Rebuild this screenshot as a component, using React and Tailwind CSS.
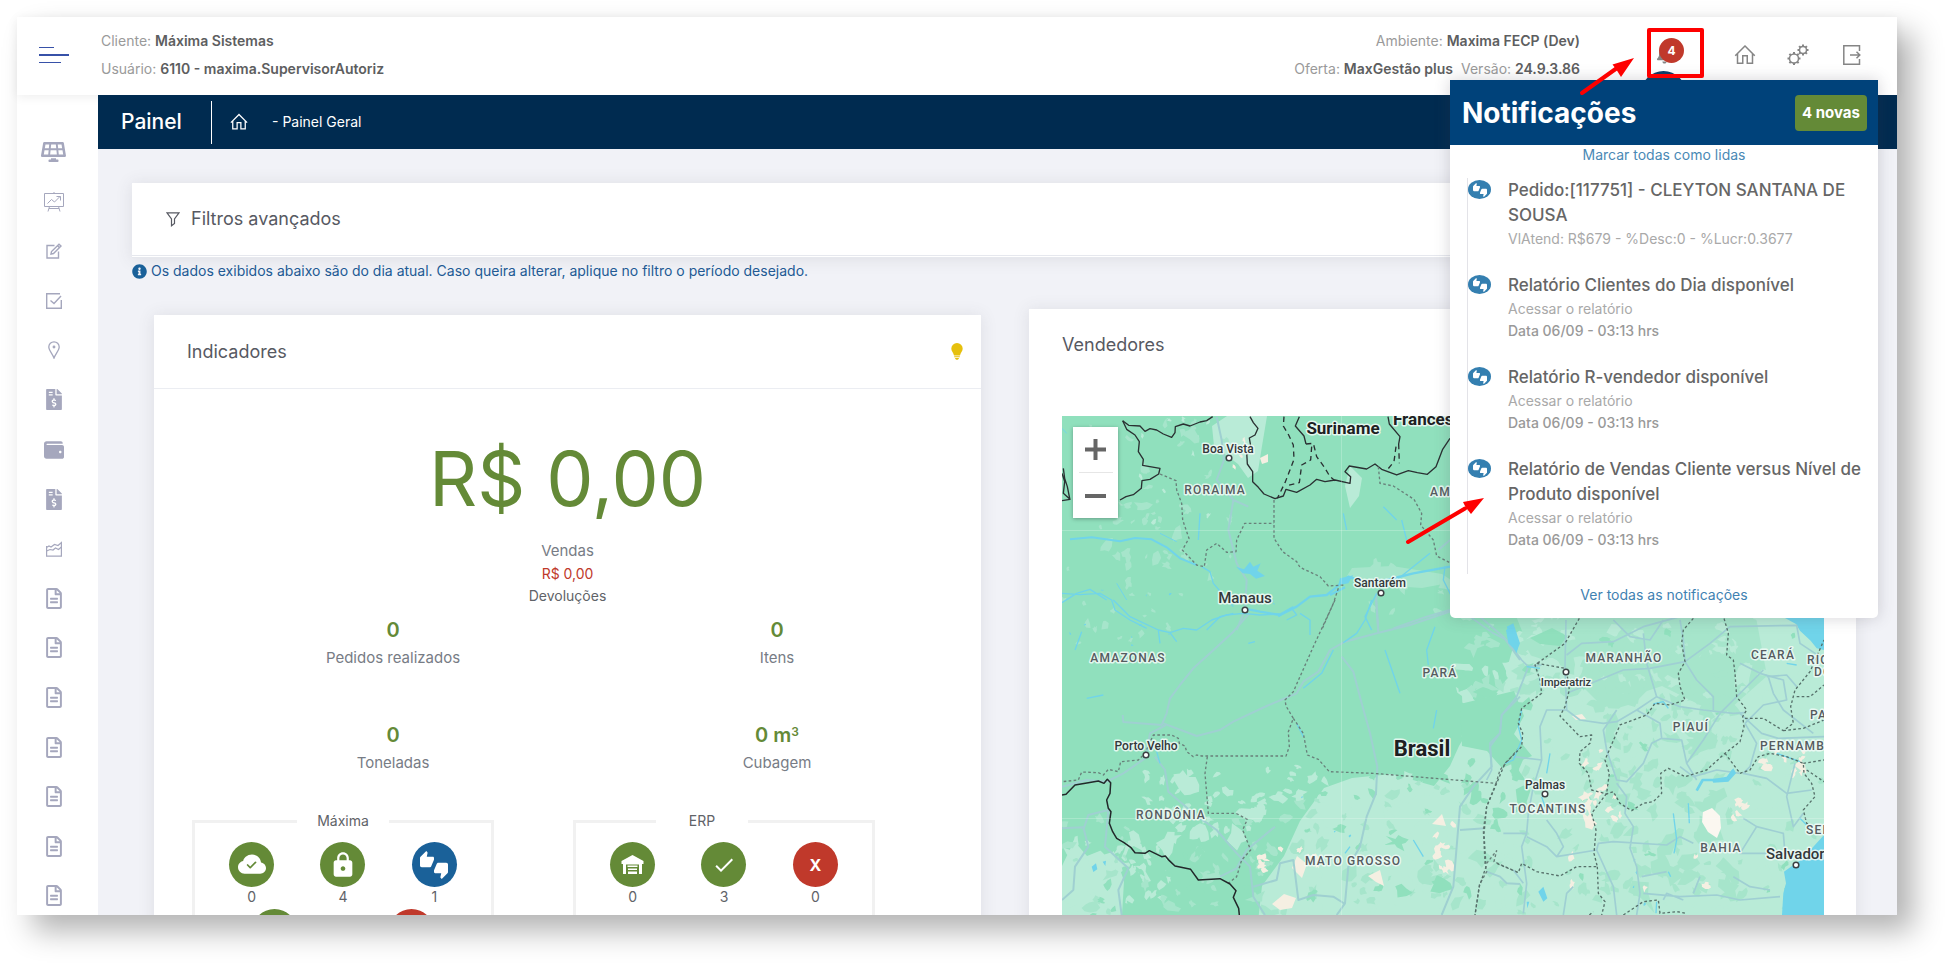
import {
  FaSolarPanel, FaFileInvoiceDollar, FaWallet, FaRegFileAlt, FaInfoCircle, FaBell,
} from "react-icons/fa";
import { MdLock, MdThumbsUpDown, MdCheck } from "react-icons/md";
import { BsCloudCheckFill } from "react-icons/bs";
import { LiaHomeSolid } from "react-icons/lia";

/* ---------- line icons ---------- */

const line = { fill: "none", stroke: "currentColor" };

function PresentationIcon() {
  return (
    <svg className="h-5 w-5" viewBox="0 0 20 20" {...line} strokeWidth="1">
      <path d="M.5 1.5h19v13H.5zM10 0v1.5M5.5 14.5L4 19.5M14.500 14.500L16 19.500M5 16.500h10" />
      <path d="M3.500 11.500L7.500 7.500L10.500 10L16 4.500M12.500 4.500H16.500V8.500" />
    </svg>
  );
}

function EditIcon() {
  return (
    <svg className="h-4 w-4" viewBox="0 0 16 16" {...line} strokeWidth="1.4">
      <path d="M8.500 2.500H1V15H12.500V8.500" />
      <path d="M5 11L5.500 8.500L13 1.200L15 3L7.500 10.500Z" />
      <path d="M11.500 2.700L13.500 4.600" />
    </svg>
  );
}

function CheckBoxIcon() {
  return (
    <svg className="h-4 w-4" viewBox="0 0 16 16" {...line} strokeWidth="1.4">
      <path d="M14 .7H.7V15.300H15.300V7" />
      <path d="M4.500 7.500L8 10.500L15 3" />
    </svg>
  );
}

function PinIcon() {
  return (
    <svg className="h-[18px] w-3" viewBox="0 0 12 18" {...line} strokeWidth="1.3">
      <path d="M6 17C5 13.500.8 9.500.8 6A5.200 5.200 0 0 1 11.200 6C11.200 9.500 7 13.500 6 17Z" />
      <circle cx="6" cy="6" r=".8" fill="currentColor" />
    </svg>
  );
}

function AreaChartIcon() {
  return (
    <svg className="h-4 w-4" viewBox="0 0 16 16" {...line} strokeWidth="1.2">
      <path d="M.6 5V15.200H15.400V1.500L12 4.500L8.500 3.500L5 6L3 5L.6 6.500" />
      <path d="M.6 10L4 8.500L7 9L9.500 7L12.500 8.500L15.400 6" />
    </svg>
  );
}

function FilterIcon() {
  return (
    <svg className="h-4 w-[14px]" viewBox="0 0 14 16" {...line} strokeWidth="1.2">
      <path d="M1 1.800H13L8.500 8V12.500L5.500 14.800V8Z" />
    </svg>
  );
}

function BulbIcon() {
  return (
    <svg className="h-[17px] w-3" viewBox="0 0 12 17" fill="#e6c00d">
      <path d="M6 0A5.700 5.700 0 0 0 .3 5.800C.3 8.500 2.600 9.800 3 12.500H9C9.400 9.800 11.700 8.500 11.700 5.800A5.700 5.700 0 0 0 6 0ZM3.200 13.200H8.800V14.300H3.200ZM4 15H8C7.800 16.200 7 16.800 6 16.800S4.200 16.200 4 15Z" />
    </svg>
  );
}

function Gear({ cx, cy, r }) {
  return (
    <g transform={`translate(${cx} ${cy})`}>
      <circle r={r} />
      {[0, 45, 90, 135, 180, 225, 270, 315].map((a) => (
        <path key={a} transform={`rotate(${a})`} d={`M0 ${-r}V${-r - 2}`} strokeWidth="2" />
      ))}
    </g>
  );
}

function GearsIcon() {
  return (
    <svg className="h-[22px] w-[22px]" viewBox="0 0 22 22" {...line} strokeWidth="1.500">
      <Gear cx={7} cy={14.5} r={4.500} />
      <Gear cx={16} cy={6} r={3.500} />
    </svg>
  );
}

function ExitIcon() {
  return (
    <svg className="h-5 w-[18px]" viewBox="0 0 18 20" {...line} strokeWidth="1.500">
      <path d="M16.500 6V.8H.8V19.200H16.500V14" />
      <path d="M7 10H16.800M13.500 6.800L16.800 10L13.500 13.200" />
    </svg>
  );
}

function WarehouseIcon() {
  return (
    <svg className="h-[20px] w-[23px]" viewBox="0 0 23 20" fill="currentColor">
      <path d="M11.500 0L22.500 6V9H21V19H18V9.500H5V19H2V9H.5V6Z" />
      <path d="M6.500 10.500H16.500V12H6.500ZM7 13.500H16V15H7ZM7 16.500H16V19H7Z" />
    </svg>
  );
}

/* ---------- sidebar ---------- */

const fileItems = ["Pedidos", "Clientes", "Produtos", "Metas", "Visitas", "Rotas", "Comissões"];

const menu = [
  { name: "Painel", icon: <FaSolarPanel className="h-[22px] w-[25px]" /> },
  { name: "Desempenho", icon: <PresentationIcon /> },
  { name: "Edição", icon: <EditIcon /> },
  { name: "Tarefas", icon: <CheckBoxIcon /> },
  { name: "Localização", icon: <PinIcon /> },
  { name: "Faturas", icon: <FaFileInvoiceDollar className="h-[21px] w-4" /> },
  { name: "Carteira", icon: <FaWallet className="h-5 w-5" /> },
  { name: "Cobranças", icon: <FaFileInvoiceDollar className="h-[21px] w-4" /> },
  { name: "Gráficos", icon: <AreaChartIcon /> },
  ...fileItems.map((name) => ({ name, icon: <FaRegFileAlt className="h-[21px] w-4" /> })),
];

function Sidebar() {
  return (
    <nav aria-label="Menu" className="w-[81px] shrink-0 bg-white">
      <ul className="flex h-full flex-col justify-between pt-[45px] pb-[7px] text-[#a5a7bd]">
        {menu.map((m) => (
          <li key={m.name} className="flex justify-center pr-2">
            <a href="#" aria-label={m.name} className="flex h-6 items-center">
              {m.icon}
            </a>
          </li>
        ))}
      </ul>
    </nav>
  );
}

/* ---------- header ---------- */

function Info({ label, value }) {
  return (
    <span>
      {label}: <span className="font-semibold text-[#5d5e60]">{value}</span>
    </span>
  );
}

function Header() {
  return (
    <header className="relative z-10 flex h-[78px] shrink-0 items-center bg-white pr-9 pb-[2px] pl-[22px] text-sm leading-7 text-[#9a9a9a] shadow-[0_2px_10px_rgba(0,0,0,0.07)]">
      <button type="button" aria-label="Abrir menu" className="flex w-[62px] flex-col gap-[6px]">
        <span className="h-px w-[15px] bg-[#3751a8]" />
        <span className="h-[2px] w-[30px] bg-[#3751a8]" />
        <span className="h-px w-[22px] bg-[#3751a8]" />
      </button>
      <div className="flex flex-col">
        <Info label="Cliente" value="Máxima Sistemas" />
        <Info label="Usuário" value="6110 - maxima.SupervisorAutoriz" />
      </div>
      <div className="ml-auto flex flex-col items-end">
        <Info label="Ambiente" value="Maxima FECP (Dev)" />
        <span className="flex gap-2">
          <Info label="Oferta" value="MaxGestão plus" />
          <Info label="Versão" value="24.9.3.86" />
        </span>
      </div>
      <div className="flex items-center text-[#858585]">
        <button type="button" aria-label="Notificações" className="relative ml-[77px] w-[21px] py-2">
          <FaBell className="h-[18px] w-[15px]" />
          <span className="absolute top-0 left-[2px] flex h-[25px] w-[25px] items-center justify-center rounded-full bg-[#c0392b] text-xs font-bold text-white">
            4
          </span>
        </button>
        <a href="#" aria-label="Início" className="ml-[55px]">
          <LiaHomeSolid className="h-6 w-6" />
        </a>
        <a href="#" aria-label="Configurações" className="ml-[30px]">
          <GearsIcon />
        </a>
        <a href="#" aria-label="Sair" className="ml-[34px]">
          <ExitIcon />
        </a>
      </div>
    </header>
  );
}

/* ---------- indicators ---------- */

function Kpi({ value, label }) {
  return (
    <div className="text-center leading-7">
      <div className="text-xl font-semibold text-[#648a37]">{value}</div>
      <div className="text-[15px] text-[#777c85]">{label}</div>
    </div>
  );
}

function Status({ tone, value, children }) {
  return (
    <div className="flex flex-col items-center text-sm leading-5 text-[#5f6368]">
      <span className={`flex h-[45px] w-[45px] items-center justify-center rounded-full text-white ${tone}`}>
        {children}
      </span>
      {value}
    </div>
  );
}

const green = "bg-[#648a37]";
const red = "bg-[#c0392b]";

function Indicadores() {
  return (
    <section className="mt-[6px] bg-white shadow-[0_1px_15px_1px_rgba(69,65,78,0.1)]">
      <div className="flex h-[74px] items-center justify-between border-b border-[#ebedf2] pr-[18px] pl-[33px]">
        <h2 className="text-lg text-[#575962]">Indicadores</h2>
        <BulbIcon />
      </div>
      <div className="pt-[50px] text-center">
        <div className="text-[75px] leading-[80px] text-[#648a37]">R$ 0,00</div>
        <div className="mt-5 text-[15px] leading-6 text-[#777c85]">Vendas</div>
        <div className="text-sm leading-[22px] text-[#c0392b]">R$ 0,00</div>
        <div className="text-sm leading-[22px] text-[#5f6368]">Devoluções</div>
      </div>
      <div className="mt-[9px] grid grid-cols-2 gap-y-[49px] pr-3 pl-[47px]">
        <Kpi value="0" label="Pedidos realizados" />
        <Kpi value="0" label="Itens" />
        <Kpi value="0" label="Toneladas" />
        <Kpi value={<>0 m<sup className="text-xs">3</sup></>} label="Cubagem" />
      </div>
      <div className="mt-[34px] grid grid-cols-2 pr-[27px] pl-[38px]">
        <fieldset className="mr-[79px] border-[3px] border-[#f1f1f1] px-[11px] pb-4">
          <legend className="mx-auto w-[92px] text-center text-sm leading-5 text-[#5f6368]">Máxima</legend>
          <div className="grid grid-cols-3 pt-[11px]">
            <Status tone={green} value="0"><BsCloudCheckFill className="h-7 w-7" /></Status>
            <Status tone={green} value="4"><MdLock className="h-7 w-7" /></Status>
            <Status tone="bg-[#1a6199]" value="1"><MdThumbsUpDown className="h-7 w-7" /></Status>
          </div>
          <div className="mt-[2px] grid grid-cols-2">
            <Status tone={green} />
            <Status tone={red} />
          </div>
        </fieldset>
        <fieldset className="mr-[79px] border-[3px] border-[#f1f1f1] px-[11px] pb-4">
          <legend className="mr-auto ml-[69px] w-[92px] text-center text-sm leading-5 text-[#5f6368]">ERP</legend>
          <div className="grid grid-cols-3 pt-[11px]">
            <Status tone={green} value="0"><WarehouseIcon /></Status>
            <Status tone={green} value="3"><MdCheck className="h-6 w-6" /></Status>
            <Status tone={red} value="0"><span className="text-base font-bold">X</span></Status>
          </div>
        </fieldset>
      </div>
    </section>
  );
}

/* ---------- map ---------- */

function makeRandom(seed) {
  let s = seed;
  return () => {
    s = (s * 1664525 + 1013904223) % 4294967296;
    return s / 4294967296;
  };
}

function patches(seed, zones) {
  const rnd = makeRandom(seed);
  let d = "";
  for (const [x, y, w, h, n, rMin, rMax] of zones) {
    for (let i = 0; i < n; i++) {
      const cx = x + rnd() * w;
      const cy = y + rnd() * h;
      const r = rMin + rnd() * rnd() * (rMax - rMin);
      const tilt = rnd() * 3.14;
      const steps = 7 + Math.floor(rnd() * 6);
      for (let k = 0; k < steps; k++) {
        const a = (k / steps) * Math.PI * 2;
        const q = r * (0.35 + rnd() * 0.85);
        const px = Math.cos(a) * q * 1.300;
        const py = Math.sin(a) * q * 0.8;
        const X = cx + px * Math.cos(tilt) - py * Math.sin(tilt);
        const Y = cy + px * Math.sin(tilt) + py * Math.cos(tilt);
        d += `${k ? "L" : "M"}${X.toFixed(1)} ${Y.toFixed(1)}`;
      }
      d += "Z";
    }
  }
  return d;
}

const lightPatches = patches(11, [
  [235, 355, 220, 140, 90, 3, 14],
  [400, 240, 60, 160, 40, 3, 12],
  [460, 170, 300, 330, 190, 4, 18],
  [80, 355, 120, 70, 36, 3, 14],
  [0, 420, 110, 80, 36, 3, 14],
  [190, 350, 80, 60, 16, 3, 10],
  [40, 2, 130, 140, 14, 2, 6],
]);
const midPatches = patches(29, [
  [400, 150, 80, 130, 46, 3, 14],
  [470, 160, 200, 130, 90, 4, 18],
  [540, 290, 130, 190, 80, 4, 20],
  [440, 300, 320, 190, 60, 3, 12],
  [220, 360, 240, 140, 50, 3, 12],
  [0, 400, 220, 100, 40, 3, 10],
  [20, 5, 150, 160, 50, 2, 9],
  [0, 150, 120, 80, 18, 2, 7],
  [300, 150, 120, 60, 14, 3, 9],
]);
const darkPatches = patches(47, [
  [240, 360, 220, 130, 26, 3, 13],
  [400, 190, 70, 200, 26, 4, 18],
  [480, 170, 260, 320, 22, 2, 9],
  [20, 430, 170, 70, 20, 3, 11],
]);
const sandPatches = patches(63, [
  [515, 372, 45, 34, 14, 3, 9],
  [700, 335, 45, 26, 12, 3, 10],
  [670, 370, 14, 34, 5, 4, 8],
  [522, 335, 20, 30, 4, 3, 7],
  [195, 430, 65, 30, 10, 3, 7],
  [370, 405, 26, 50, 9, 3, 7],
  [170, 22, 20, 30, 4, 2, 5],
  [500, 440, 160, 50, 5, 3, 6],
]);
const ponds = patches(85, [
  [0, 170, 260, 60, 12, 1, 2],
  [230, 380, 60, 60, 3, 1, 3],
  [560, 400, 40, 100, 4, 1, 3],
]);

function MapLabel({ x, y, size, tone, start, children }) {
  return (
    <text x={x} y={y} fontSize={size} textAnchor={start ? "start" : "middle"} className={tone}>
      {children}
    </text>
  );
}

const stateTone = "fill-[#555b5f] font-medium tracking-widest";
const cityTone = "fill-[#33383b] font-medium";
const countryTone = "fill-[#1d2022] font-bold";

const states = [
  [153, 78, "RORAIMA"], [66, 246, "AMAZONAS"], [378, 261, "PARÁ"], [109, 403, "RONDÔNIA"],
  [291, 449, "MATO GROSSO"], [486, 397, "TOCANTINS"], [562, 246, "MARANHÃO"], [629, 315, "PIAUÍ"],
  [711, 243, "CEARÁ"], [659, 436, "BAHIA"],
];
const edgeStates = [
  [698, 334, "PERNAMBUCO"], [745, 248, "RIO"], [752, 260, "DO"],
  [748, 303, "PARAÍBA"], [744, 418, "SERGIPE"], [368, 80, "AMAPÁ"],
];
const cities = [
  [166, 37, 12, "Boa Vista"], [183, 187, 15, "Manaus"], [318, 171, 12, "Santarém"],
  [84, 334, 12, "Porto Velho"], [504, 270, 11, "Imperatriz"], [483, 373, 12, "Palmas"],
];
const dots = [[167, 42], [183, 194], [319, 177], [84, 339], [504, 256], [483, 378], [734, 449]];

function BrazilMap() {
  return (
    <svg className="block h-auto w-full" viewBox="0 0 762 560" preserveAspectRatio="xMinYMin slice" role="img" aria-label="Mapa de vendedores">
      <rect width="762" height="560" fill="#90e0bd" />
      <path fill="#b9ebd7" d="M397 330L415 300L440 270L450 235L480 200L520 160L540 120L762 120V560H190L200 470L222 440L238 405L262 372L290 362L330 358L372 370L388 350Z" />
      <path fill="#a6e5cb" d="M440 150L470 120L680 100L690 180L705 260L660 300L600 270L540 290L500 250L470 240L450 190Z" />
      <path fill="#b9ebd7" d="M152 30L150 10L165 0H205L200 30L196 55L186 62L176 48ZM288 50L300 62L297 80L288 92L283 70ZM0 450L12 425L25 440L50 430L62 465L60 499L0 499Z" />
      <path fill="#a6e5cb" d="M290 152L330 150L380 158L392 166L360 172L300 168L285 160Z" />
      <path fill="#b9ebd7" d={lightPatches} />
      <path fill="#a6e5cb" d={midPatches} />
      <path fill="#90e0bd" d={darkPatches} />
      <path fill="#90e0bd" d="M398 288L452 275L462 300L452 318L470 340L440 352L425 335L400 330ZM468 222L490 212L505 220L498 230L478 228ZM460 140L490 138L496 155L470 160Z" />
      <path fill="#f5efe2" d={sandPatches} />
      <path fill="#fbf7f0" d="M641 396L650 392L658 400L659 412L655 422L646 416L640 406Z" />
      <path fill="#f5efe2" d="M210 488L222 478L234 482L230 492L218 494ZM306 460L318 454L322 470L314 466ZM370 408L380 398L384 410ZM235 440L245 448L240 462L230 452ZM198 42L206 38L206 46L200 48ZM510 300L520 298L524 303L514 304Z" />
      <path fill="#70d4ea" d={ponds} />

      {/* northern rivers, roads and borders */}
      <g transform="translate(-42 -116) scale(.33333)" fill="none" strokeLinejoin="round">
        <g stroke="#9fd0d1" strokeWidth="6">
          <path d="M590 350L605 420L612 480L590 540L640 600L625 690L650 790L680 840L675 930L650 990M640 600L685 620M1068 880L1075 990M1290 930L1220 950L1120 985M1290 720L1255 750" />
        </g>
        <g stroke="#70d4ea" strokeWidth="5">
          <path d="M150 718L215 712L300 724L345 714L395 718L440 742L480 775L530 795" strokeWidth="6" />
          <path d="M545 800L570 815L580 850L610 885L640 920M126 880L180 884L240 880L275 900L285 930L330 960L380 985M126 908L170 880L210 868L260 900M640 940L600 950L560 990M1230 760L1130 840M1055 990L1035 950L1070 880M1275 800L1270 840L1300 900M1145 660L1160 720M970 640L980 690M1090 620L1130 660M540 640L535 720" strokeWidth="4" />
          <path d="M670 925L720 935L780 945L830 920L870 890L920 885L945 865L985 830L1030 845L1100 840L1180 820L1290 800M930 885L975 862" strokeWidth="7" />
          <path d="M126 385L140 400M290 850L320 900M420 700L470 725" strokeWidth="3" />
          <path d="M775 950L815 925L830 945L800 960" strokeWidth="4" />
        </g>
        <path fill="#70d4ea" d="M648 800L672 808L690 785L700 800L722 790L712 812L735 828L708 836L690 822L668 820ZM960 835L1000 826L985 850L955 856Z" />
        <g stroke="#2a3032" strokeWidth="4">
          <path d="M308 362L326 376L360 378L375 394L390 386L410 390L430 402L455 412L465 398L466 380L490 372L510 378L540 366L560 362L578 350" />
          <path d="M308 362L320 388L345 405L358 425L355 455L370 478L368 496L420 505L416 522L390 538L366 542L364 565L340 584L318 590L300 600" />
          <path d="M126 520L134 545L130 580L150 598L126 602M130 505L134 535L142 560L150 600" />
          <path d="M690 350L700 368L714 385L705 405L688 414L692 438L680 455L682 492L698 515L698 545L715 562L732 582L765 596L790 588L798 568L830 577L870 555L890 538L915 545L945 540L990 550L992 530L975 515L988 498L1040 507L1065 492L1085 508L1130 525L1165 512L1192 518L1222 523L1248 500L1268 448L1290 415" />
          <path d="M838 350L826 378L852 408L858 432M1104 350L1108 372L1140 410L1136 432" />
          <path strokeDasharray="16 12" d="M792 350L790 378L806 405L820 435L822 478L806 520L795 548L772 595M858 432L880 430L890 470L912 500L930 530L945 542M875 440L872 480L845 495L838 548L805 556M1136 432L1138 490M1128 440L1122 485L1100 512" />
        </g>
        <g stroke="#68807a" strokeWidth="4" strokeDasharray="8 7">
          <path d="M420 522L468 542L470 570L485 610L488 660L507 715L487 750L530 795L553 800L560 750L590 730L620 757L648 755L650 720L674 670H762" />
          <path d="M762 600V715L788 755L830 785L840 802L900 830L925 858L975 855M955 865L940 910L905 990" />
          <path d="M1075 500L1080 550L1120 558L1182 598L1205 640L1202 675L1240 720L1250 768L1290 788" />
        </g>
      </g>

      {/* south-western rivers, roads and borders */}
      <g transform="translate(-42 184) scale(.33333)" fill="none" strokeLinejoin="round">
        <g stroke="#9fd0d1" strokeWidth="6">
          <path d="M688 40L640 95L570 160L520 205L480 255L450 295L440 340L425 375L310 366L308 345M430 370L530 408L600 390L640 365L740 318L830 280L850 245L895 215L930 150L975 125L1070 100L1170 75L1290 35M1068 0L1075 100" />
          <path d="M965 170L1000 215L1025 310L1050 400L1072 500L1068 580L1040 650L1020 740L985 800L975 910L950 945M405 470L435 510L445 575L520 640L590 690L650 760L690 800L700 890L735 945M126 560L200 540L260 545L310 520L375 475L390 400L438 375" />
          <path d="M126 685L190 682L205 740L165 800L160 870L126 900M265 630L205 645L190 690M265 630L255 740L325 805L295 870L305 945M600 830L650 805L680 750L765 680M700 860L770 840L780 790L820 780L835 900L880 885L940 890L975 912" />
          <path d="M1500 290L1445 345L1440 400L1410 430L1415 500L1360 560L1320 620L1310 740L1300 860L1265 945M1320 690L1395 685M1400 815L1440 830L1460 850L1500 852M1380 50L1450 110L1500 180" />
        </g>
        <g stroke="#70d4ea" strokeWidth="4">
          <path d="M280 0L330 50L415 90L450 98L490 85L530 90L575 60L620 45L670 40L720 45L780 42L820 20M415 90L420 130M450 98L470 125M840 40L870 60L870 105M1055 0L1035 60L1010 100L970 128M940 150L905 220L850 265M1245 80L1220 150L1225 195M1095 150L1140 280M1250 330L1240 385M830 370L850 410M200 295L250 285M685 130L705 125M410 455L420 490M990 740L975 760M1180 720L1210 770M185 95L165 150" />
        </g>
        <path fill="#70d4ea" d="M1460 80L1480 70L1500 130L1488 160L1475 120ZM215 800L228 790L232 808L220 816ZM248 785L258 782L256 798Z" />
        <g stroke="#68807a" strokeWidth="4" strokeDasharray="8 7">
          <path d="M945 0L880 140L820 275L795 300L798 318L820 355L805 395L808 440L798 468H545L530 465L520 470L500 455L495 438L478 430L475 415L455 405H400L375 460L355 480L302 485L295 515L265 508L250 525L235 518L185 516L175 540L126 545" />
          <path d="M820 355L850 400L862 465L895 478L928 515L1060 520L1428 550L1440 510L1500 440M562 470L555 520L565 640H648L682 658L668 690L692 750L665 780L650 830L625 850M1428 550L1400 620L1390 690L1395 790L1400 815L1378 855L1365 945M1400 790L1430 752L1422 785L1495 818" />
        </g>
        <path stroke="#22282a" strokeWidth="4.500" d="M126 585L138 583L165 555L205 548L235 543L252 550L262 538L272 548L270 580L260 600L265 625L273 635L268 670L278 695L290 715L312 728L332 742L345 758L375 760L388 752L425 770L436 768L448 782L465 798L512 808L535 840L600 836L630 852L648 872L640 892L656 925L658 945L690 1020L760 1060L780 1140" />
      </g>

      {/* eastern coast, rivers, roads and borders */}
      <g transform="translate(388 184) scale(.33333)" fill="none" strokeLinejoin="round">
        <path fill="#70d4ea" d="M990 40H1122V150L1100 145L1082 122L1050 92L1038 72L1005 54ZM1122 705L1092 738L1060 775L1030 795L1002 815L1008 850L1000 880L996 945L985 1150H1122Z" />
        <g stroke="#9fcfd3" strokeWidth="5">
          <path d="M60 50L130 100L170 120L215 180L235 200L200 290L155 345L150 400L120 440L125 510L110 540M348 60L345 200L350 330L390 360L460 370L500 365L560 330L620 290L690 320L760 330L850 340L885 338" />
          <path d="M235 200L275 195M350 165L395 130L490 125L580 80L690 50M490 60L540 110L600 120L640 60M580 100L590 190L620 290M705 185L600 205L520 210L350 280M705 185L740 240L790 290L790 330M705 185L780 130L840 80L1040 76L1050 130L1110 170M690 60L700 120L705 185" />
          <path d="M500 330L460 390L470 450L500 540L530 545L580 490L605 430L635 415L695 420L710 490L740 540M560 330L630 370L635 415M710 490L760 420L810 340L940 210M885 370L920 430L900 500L880 520L950 535L1010 580L1085 570M870 340L935 400L985 415L1122 410M870 190L930 220L1000 240L1010 300L940 315L885 370" />
          <path d="M350 330L290 330L270 380L275 480L250 560L235 640L230 700L215 740L230 850L220 940M190 470L275 480M230 700L160 700M290 660L320 700L340 740L320 770L290 740L230 710M320 770L440 750L445 730L490 725L650 735L690 710L730 730M500 550L530 590L525 640L550 680L540 745L560 800L570 880L560 945M440 750L490 860L500 945" />
          <path d="M690 500L730 530L800 510L870 520M1035 490L1010 590L1030 680L1060 640M1000 760L870 760L920 680L880 655M920 680L1000 700L1005 760M580 880L690 890L800 885L870 900L990 890M640 900L650 880L700 900M850 830L900 860L960 870M730 880L750 830M340 945L350 880L370 860M190 810L220 850M575 830L650 815M955 230L970 280L1000 330L1090 400M950 230L1010 225L1040 260" />
        </g>
        <g stroke="#70d4ea" strokeWidth="5">
          <path d="M740 572L758 540L830 540L850 510" strokeWidth="8" />
          <path d="M215 330L205 380L215 420L190 480L165 490M230 200L270 205M610 312L640 305L655 325M715 610L718 670M670 640L680 720L672 760M300 460L290 520M1010 190L1040 195M980 460L1050 485M655 815L662 830M620 905L618 940M275 590L285 620M1050 655L1070 675" strokeWidth="4" />
        </g>
        <path fill="#70d4ea" d="M168 90L185 80L190 120L205 135L200 160L190 145L175 130ZM785 538L830 530L850 505L858 520L835 545L790 548ZM265 875L280 860L292 895L280 905ZM230 905L238 905L232 925Z" />
        <g stroke="#56706a" strokeWidth="4" strokeDasharray="8 7">
          <path d="M388 55L345 130L255 195L270 240L275 280L215 325L205 370L218 400L215 440L165 490L142 545L110 620L102 700L108 800L88 860L75 945M260 190L345 205" />
          <path d="M350 215L358 270L345 320L330 348L390 410L425 405L420 430L390 455L388 490L415 520L425 570L470 582L490 575L510 610L545 632L580 610L610 605L635 580L632 520L655 505L705 530L770 510L825 460L870 425L882 380L878 350L890 330L860 290L855 220L850 180L830 165L835 100L822 55" />
          <path d="M730 55L700 90L695 130L705 185L685 220L690 260L705 300L660 315L615 310L590 345L510 375L465 480L478 520L470 580L425 640L438 690L432 760L442 800L380 800L330 828L260 815L215 790L205 818L140 790M442 800L445 880L465 905L455 945M520 945L580 905L625 900L630 940L680 935L710 940" />
          <path d="M885 355L940 355L1000 392L1030 370L1022 320L1035 270L1080 215L1122 120M1000 392L1060 385L1122 360M1040 290L1080 290L1122 255M825 460L870 520L900 510L925 470L960 460L1010 470L1060 490L1062 520L1085 550L1095 590L1060 630L1070 670L1122 700M1060 490L1122 480M1070 510L1122 545M418 945L430 935" />
        </g>
      </g>

      <path d="M0 114.500H762M279.500 0V560M0 402.500H762" stroke="#ffffff" strokeOpacity=".22" />

      <g fill="#fff" stroke="#3b4144" strokeWidth="1.500">
        {dots.map(([x, y]) => (
          <circle key={`${x}-${y}`} cx={x} cy={y} r="2.800" />
        ))}
      </g>
      <g stroke="#f2fbf7" strokeOpacity=".85" strokeWidth="3" strokeLinejoin="round" paintOrder="stroke" className="font-['Roboto',sans-serif]">
        {states.map(([x, y, name]) => (
          <MapLabel key={name} x={x} y={y} size={12} tone={stateTone}>{name}</MapLabel>
        ))}
        {edgeStates.map(([x, y, name]) => (
          <MapLabel key={name} x={x} y={y} size={12} tone={stateTone} start>{name}</MapLabel>
        ))}
        {cities.map(([x, y, size, name]) => (
          <MapLabel key={name} x={x} y={y} size={size} tone={cityTone}>{name}</MapLabel>
        ))}
        <MapLabel x={704} y={443} size={15} tone={cityTone} start>Salvador</MapLabel>
        <MapLabel x={281} y={18} size={17} tone={countryTone}>Suriname</MapLabel>
        <MapLabel x={331} y={9} size={17} tone={countryTone} start>Francesa</MapLabel>
        <MapLabel x={360} y={340} size={22} tone={countryTone}>Brasil</MapLabel>
      </g>
    </svg>
  );
}

function Vendedores() {
  return (
    <section className="bg-white pt-6 pr-8 pl-[33px] shadow-[0_1px_15px_1px_rgba(69,65,78,0.1)]">
      <h2 className="text-lg leading-6 text-[#575962]">Vendedores</h2>
      <div className="relative mt-[59px] overflow-hidden">
        <BrazilMap />
        <div className="absolute top-[11px] left-[11px] flex w-[45px] flex-col items-center bg-white shadow-[0_1px_4px_rgba(0,0,0,0.3)]">
          <button type="button" aria-label="Aumentar zoom" className="flex h-[45px] w-full items-center justify-center">
            <svg className="h-[21px] w-[21px]" viewBox="0 0 21 21" fill="#666">
              <path d="M0 8.500H8.500V0H12.500V8.500H21V12.500H12.500V21H8.500V12.500H0Z" />
            </svg>
          </button>
          <span className="h-px w-[34px] bg-[#e6e6e6]" />
          <button type="button" aria-label="Diminuir zoom" className="flex h-[45px] w-full items-center justify-center">
            <svg className="h-1 w-[21px]" viewBox="0 0 21 4" fill="#666">
              <path d="M0 0H21V4H0Z" />
            </svg>
          </button>
        </div>
      </div>
    </section>
  );
}

/* ---------- notifications ---------- */

const notifications = [
  { title: "Pedido:[117751] - CLEYTON SANTANA DE SOUSA", text: "VlAtend: R$679 - %Desc:0 - %Lucr:0.3677" },
  { title: "Relatório Clientes do Dia disponível", text: "Acessar o relatório", date: "Data 06/09 - 03:13 hrs" },
  { title: "Relatório R-vendedor disponível", text: "Acessar o relatório", date: "Data 06/09 - 03:13 hrs" },
  { title: "Relatório de Vendas Cliente versus Nível de Produto disponível", text: "Acessar o relatório", date: "Data 06/09 - 03:13 hrs" },
];

function Notifications() {
  return (
    <>
      <div className="absolute top-[54px] right-[211px] z-20 h-[45px] w-[45px] rounded-full bg-[#0b3d68]" />
      <aside className="absolute top-[63px] right-[19px] z-20 w-[428px] rounded-b-[5px] bg-white pb-[13px] text-center text-sm leading-5 shadow-[0_0_15px_1px_rgba(69,65,78,0.2)]">
        <div className="flex h-[65px] items-center justify-between bg-[#00427a] pr-[11px] pl-3 text-white">
          <h2 className="text-[28px] font-bold">Notificações</h2>
          <span className="flex h-9 w-[72px] items-center justify-center rounded bg-[#648a37] text-[15px] font-bold">
            4 novas
          </span>
        </div>
        <a href="#" className="text-[#4a89b5]">Marcar todas como lidas</a>
        <ul className="mt-[13px] ml-[17px] border-l border-[#e3e3e8] text-left">
          {notifications.map((n) => (
            <li key={n.title} className="flex items-start gap-[17px] pr-3 pb-[23px]">
              <span className="mt-[2px] flex h-[19px] w-[23px] shrink-0 items-center justify-center rounded-[50%] bg-[#347fb0] text-white">
                <MdThumbsUpDown className="h-[14px] w-[14px]" />
              </span>
              <div className="leading-[22px] text-[#a9a9a9]">
                <h3 className="text-[17px] leading-[25px] font-medium text-[#666]">{n.title}</h3>
                <p>{n.text}</p>
                {n.date && <p className="font-medium text-[#999]">{n.date}</p>}
              </div>
            </li>
          ))}
        </ul>
        <a href="#" className="mt-[11px] inline-block text-[#3f82b2]">Ver todas as notificações</a>
      </aside>
    </>
  );
}

function Annotations() {
  return (
    <>
      <div className="pointer-events-none absolute top-[11px] right-[193px] z-30 h-[50px] w-[57px] rounded-[2px] border-4 border-[#fe0000]" />
      <svg className="pointer-events-none absolute top-[38px] right-[262px] z-30 h-[42px] w-[56px]" viewBox="0 0 56 42">
        <path d="M3 38L38 13" stroke="#fe0000" strokeWidth="4" strokeLinecap="round" />
        <path d="M55 3L33.500 9.500L37 14L42 22Z" fill="#fe0000" />
      </svg>
      <svg className="pointer-events-none absolute top-[480px] right-[412px] z-30 h-[48px] w-[80px]" viewBox="0 0 80 48">
        <path d="M3 45L60 11.500" stroke="#fe0000" strokeWidth="4" strokeLinecap="round" />
        <path d="M79 1L58 5L60.500 10L66 17Z" fill="#fe0000" />
      </svg>
    </>
  );
}

/* ---------- page ---------- */

export default function App() {
  return (
    <div className="h-screen overflow-hidden bg-white pt-[17px] pr-12 pb-12 pl-[17px] font-['Inter',sans-serif]">
      <div className="relative flex h-full flex-col bg-white shadow-[16px_16px_28px_rgba(0,0,0,0.3)]">
        <Header />
        <div className="flex min-h-0 flex-1">
          <Sidebar />
          <div className="flex min-w-0 flex-1 flex-col overflow-hidden bg-[#f1f2f7]">
            <div className="relative z-10 flex h-[54px] shrink-0 items-center bg-[#002b50] pl-[23px] text-sm text-white">
              <h1 className="w-[90px] text-[21px] font-medium">Painel</h1>
              <a href="#" aria-label="Início" className="flex h-[43px] items-center border-l border-white pl-[17px]">
                <LiaHomeSolid className="h-5 w-5" />
              </a>
              <span className="ml-[23px]">- Painel Geral</span>
            </div>
            <main className="min-h-0 flex-1 overflow-hidden pt-[34px] pr-[34px] pl-[34px]">
              <button type="button" className="flex h-[75px] w-full items-center gap-[11px] border-b-[3px] border-double border-[#e6e8ee] bg-white pl-[34px] text-lg text-[#575962] shadow-[0_1px_15px_1px_rgba(69,65,78,0.1)]">
                <FilterIcon />
                Filtros avançados
              </button>
              <p className="flex h-[26px] items-center gap-1 text-sm text-[#225a94]">
                <FaInfoCircle className="h-[15px] w-[15px] text-[#1a6199]" />
                Os dados exibidos abaixo são do dia atual. Caso queira alterar, aplique no filtro o período desejado.
              </p>
              <div className="mt-[25px] grid grid-cols-2 items-start gap-12 pr-[7px] pl-[22px]">
                <Indicadores />
                <Vendedores />
              </div>
            </main>
          </div>
        </div>
        <Notifications />
        <Annotations />
      </div>
    </div>
  );
}
